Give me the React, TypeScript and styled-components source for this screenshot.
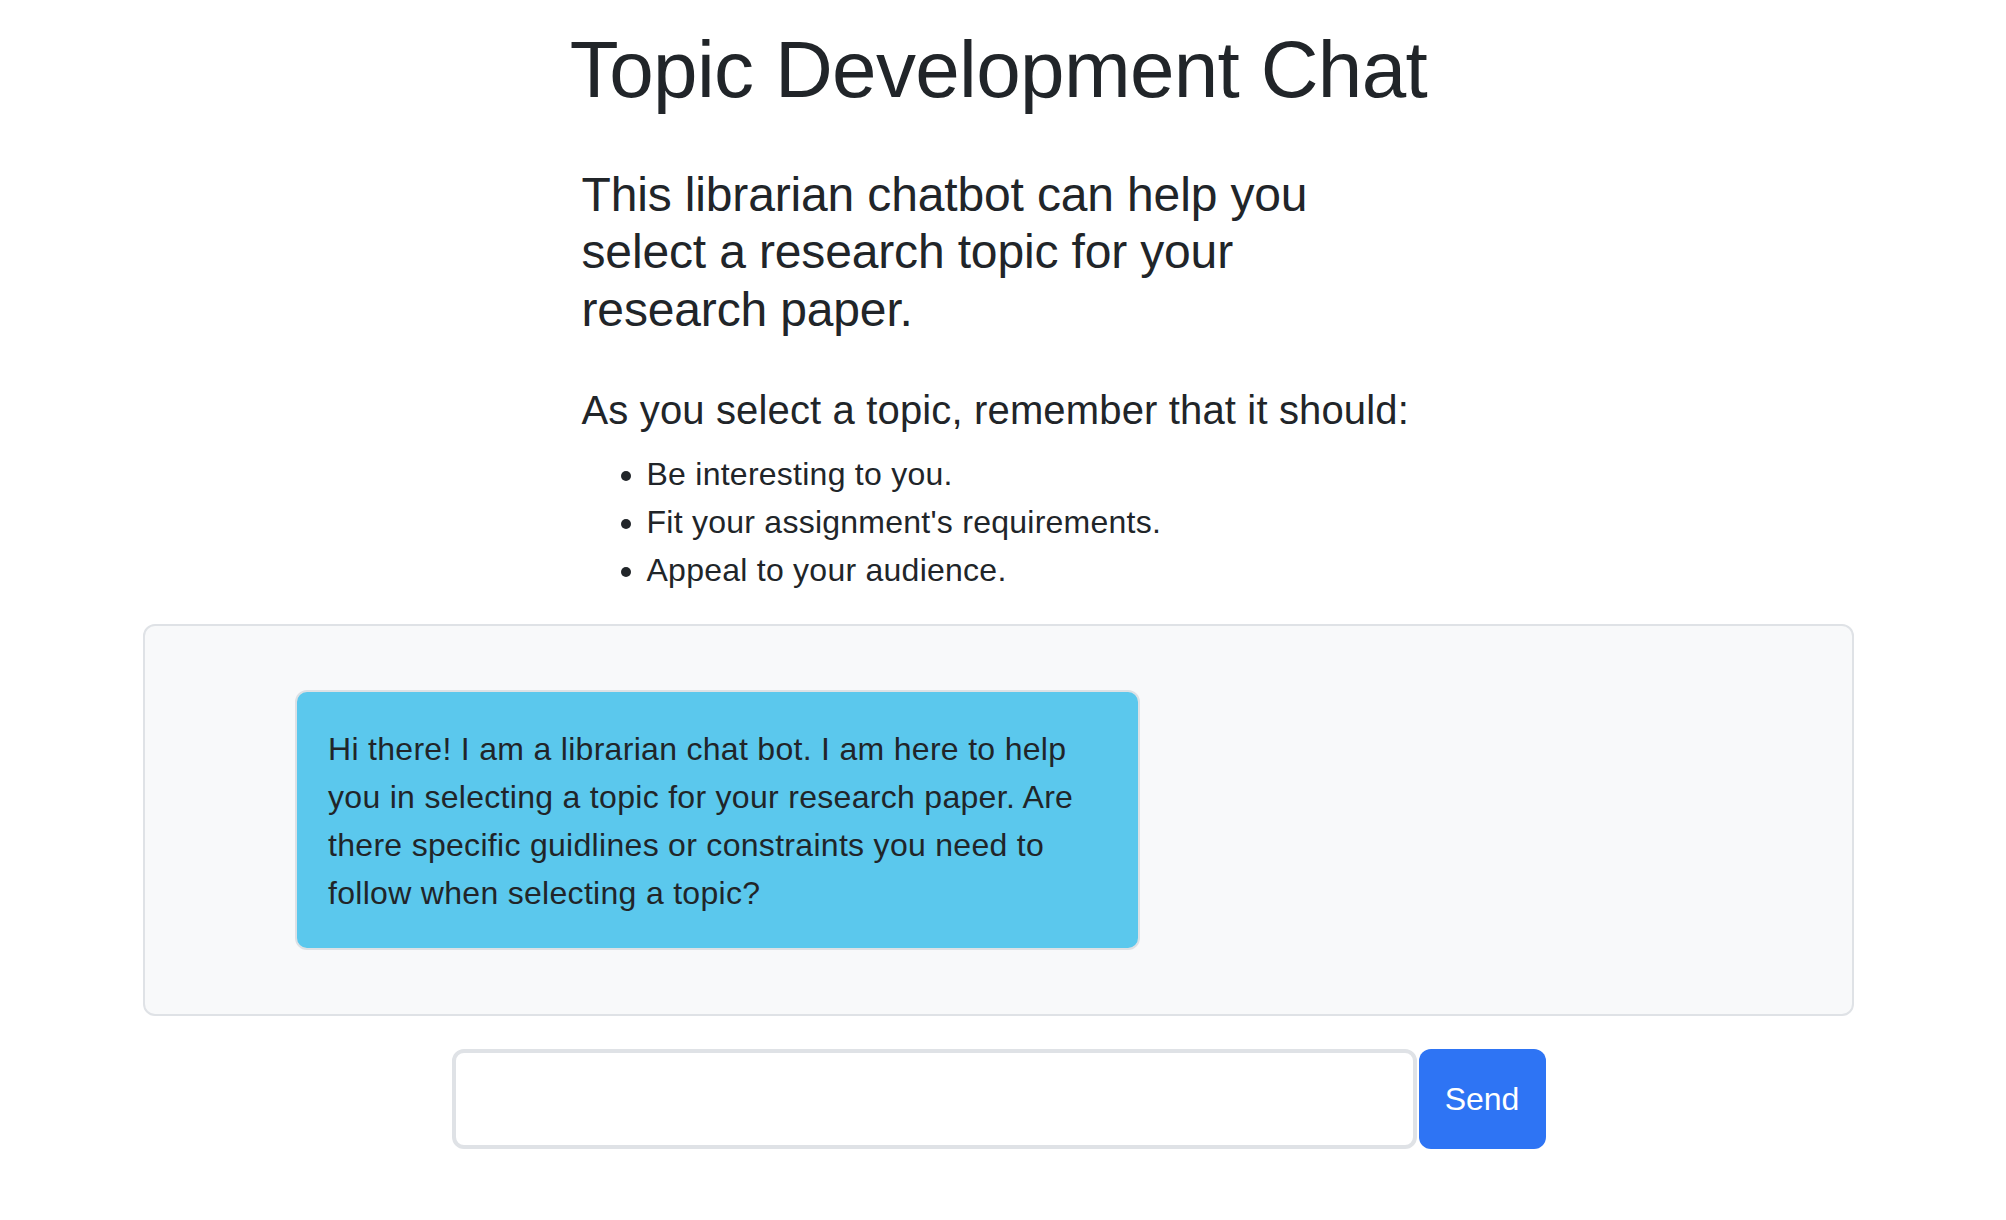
import React from "react";
import styled, { createGlobalStyle } from "styled-components";

const GlobalStyle = createGlobalStyle`
  html, body {
    margin: 0;
    padding: 0;
    background: #ffffff;
  }
  body {
    font-family: "Liberation Sans", Arial, sans-serif;
    color: #212529;
    -webkit-font-smoothing: antialiased;
  }
  * { box-sizing: border-box; }
`;

const Page = styled.main`
  display: flex;
  flex-direction: column;
  align-items: center;
  padding: 22px 9px 40px 0;
`;

const Title = styled.h1`
  margin: 0 0 47.5px;
  font-size: 80px;
  line-height: 96px;
  font-weight: 400;
  letter-spacing: -0.65px;
  text-align: center;
  color: #212529;
`;

const Intro = styled.section`
  width: 834px;
  display: flex;
  flex-direction: column;
`;

const Lead = styled.h4`
  margin: 0 0 48px;
  font-size: 48px;
  line-height: 57.6px;
  font-weight: 400;
  letter-spacing: -0.15px;
  color: #212529;
`;

const ListHeading = styled.h5`
  margin: 0 0 16px;
  font-size: 40px;
  line-height: 48px;
  font-weight: 400;
  letter-spacing: 0.15px;
  color: #212529;
`;

const Criteria = styled.ul`
  margin: 0 0 30px;
  padding-left: 65px;
  font-size: 32px;
  line-height: 48px;
  letter-spacing: 0.25px;
  color: #212529;
`;

const Criterion = styled.li`
  list-style: disc;
`;

const ChatBox = styled.div`
  width: 1711px;
  background: #f8f9fa;
  border: 2px solid #dfe2e6;
  border-radius: 12px;
  padding: 64px 64px 64px 150px;
  margin-bottom: 33px;
  display: flex;
  flex-direction: column;
  align-items: flex-start;
`;

const Bubble = styled.div<{ $from: "bot" | "user" }>`
  width: 845px;
  padding: 33px 32px 31px 31px;
  border: 2px solid #dde1e5;
  border-radius: 12px;
  background: ${(p) => (p.$from === "bot" ? "#5bc8ed" : "#2e74f4")};
  color: ${(p) => (p.$from === "bot" ? "#212529" : "#ffffff")};
  font-size: 32px;
  line-height: 48px;
  letter-spacing: 0.3px;
`;

const Composer = styled.form`
  display: flex;
  gap: 2px;
  width: 1094px;
  height: 100px;
`;

const MessageInput = styled.input`
  flex: 0 0 965px;
  height: 100%;
  border: 4px solid #dfe2e6;
  border-radius: 12px;
  background: #ffffff;
  font-family: "Liberation Sans", Arial, sans-serif;
  font-size: 32px;
  padding: 0 24px;
  color: #212529;
  outline: none;
`;

const SendButton = styled.button`
  flex: 0 0 127px;
  height: 100%;
  border: none;
  border-radius: 12px;
  background: #2e74f4;
  color: #ffffff;
  font-family: "Liberation Sans", Arial, sans-serif;
  font-size: 32px;
  cursor: pointer;
  padding: 0;
`;

const criteria = [
  "Be interesting to you.",
  "Fit your assignment's requirements.",
  "Appeal to your audience.",
];

export default function App() {
  return (
    <>
      <GlobalStyle />
      <Page>
        <Title>Topic Development Chat</Title>
        <Intro>
          <Lead>
            This librarian chatbot can help you select a research topic for
            your research paper.
          </Lead>
          <ListHeading>As you select a topic, remember that it should:</ListHeading>
          <Criteria>
            {criteria.map((c) => (
              <Criterion key={c}>{c}</Criterion>
            ))}
          </Criteria>
        </Intro>
        <ChatBox>
          <Bubble $from="bot">
            Hi there! I am a librarian chat bot. I am here to help you in
            selecting a topic for your research paper. Are there specific
            guidlines or constraints you need to follow when selecting a topic?
          </Bubble>
        </ChatBox>
        <Composer onSubmit={(e) => e.preventDefault()}>
          <MessageInput type="text" aria-label="Message" />
          <SendButton type="submit">Send</SendButton>
        </Composer>
      </Page>
    </>
  );
}
